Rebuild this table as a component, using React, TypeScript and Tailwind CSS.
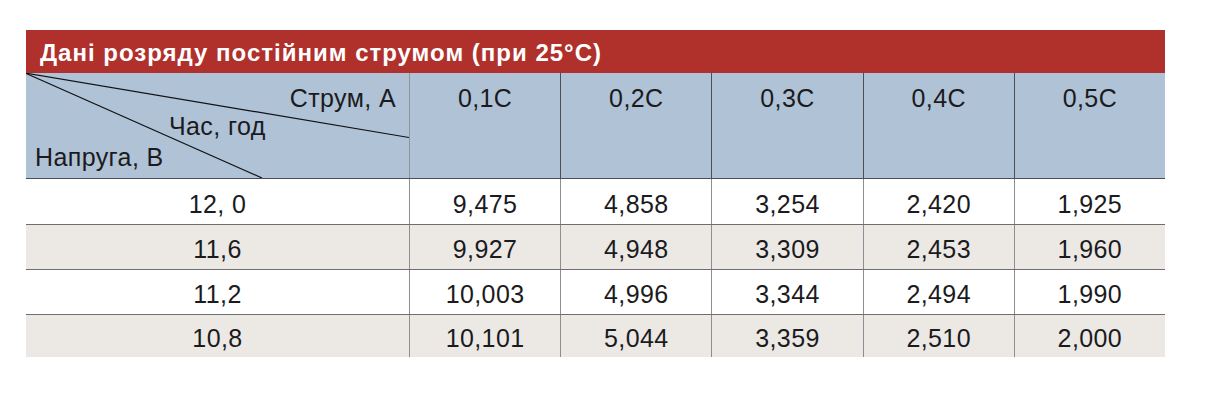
import React from "react";

const heads = ["0,1C", "0,2C", "0,3C", "0,4C", "0,5C"];

const rows = [
  { v: "12, 0", d: ["9,475", "4,858", "3,254", "2,420", "1,925"] },
  { v: "11,6", d: ["9,927", "4,948", "3,309", "2,453", "1,960"] },
  { v: "11,2", d: ["10,003", "4,996", "3,344", "2,494", "1,990"] },
  { v: "10,8", d: ["10,101", "5,044", "3,359", "2,510", "2,000"] },
];

export default function App() {
  return (
    <div className="min-h-[420px] bg-white pt-[30px] pl-[26px] font-['Liberation_Sans',Arial,sans-serif] text-[#1b1b1d]">
      <div className="w-[1139px]">
        {/* Title */}
        <div className="flex h-[43px] items-center bg-[#b0302c] pl-[14px] pt-[2px] text-[24px] font-bold leading-[28px] tracking-[1px] text-white">
          Дані розряду постійним струмом (при 25°C)
        </div>

        {/* Header */}
        <div className="grid h-[106px] grid-cols-[383px_repeat(5,1fr)] border-b border-[#4b4e57] bg-[#afc2d6] text-[25px] leading-[28px] tracking-[0.4px]">
          <div className="relative flex flex-col">
            <svg className="absolute inset-0" width="383" height="105" viewBox="0 0 383 105">
              <line x1="-1" y1="0" x2="383" y2="64.5" stroke="#111" strokeWidth="1.2" />
              <line x1="-1" y1="0" x2="236" y2="105" stroke="#111" strokeWidth="1.2" />
            </svg>
            <div className="relative pt-[11px] pr-[13px] text-right">Струм, А</div>
            <div className="relative pl-[143px]">Час, год</div>
            <div className="relative mt-[3px] pl-[9px]">Напруга, В</div>
          </div>
          {heads.map((h, i) => (
            <div
              key={h}
              className={`border-l pt-[11px] text-center ${i === 0 ? "border-[#8e949c]" : "border-[#4b4e57]"}`}
            >
              {h}
            </div>
          ))}
        </div>

        {/* Body */}
        {rows.map((r, ri) => (
          <div
            key={r.v}
            className={`grid grid-cols-[383px_repeat(5,1fr)] text-[25px] leading-[28px] tracking-[0.4px] ${
              ri % 2 === 1 ? "bg-[#ece9e5]" : "bg-white"
            } ${ri > 0 ? "border-t border-[#6e6e72]" : ""} ${ri === 3 ? "h-[43px]" : "h-[45px]"}`}
          >
            <div className="flex items-center justify-center pt-[4px]">{r.v}</div>
            {r.d.map((x, i) => (
              <div
                key={i}
                className="flex items-center justify-center border-l border-[#8e8e92] pt-[4px]"
              >
                {x}
              </div>
            ))}
          </div>
        ))}
      </div>
    </div>
  );
}
